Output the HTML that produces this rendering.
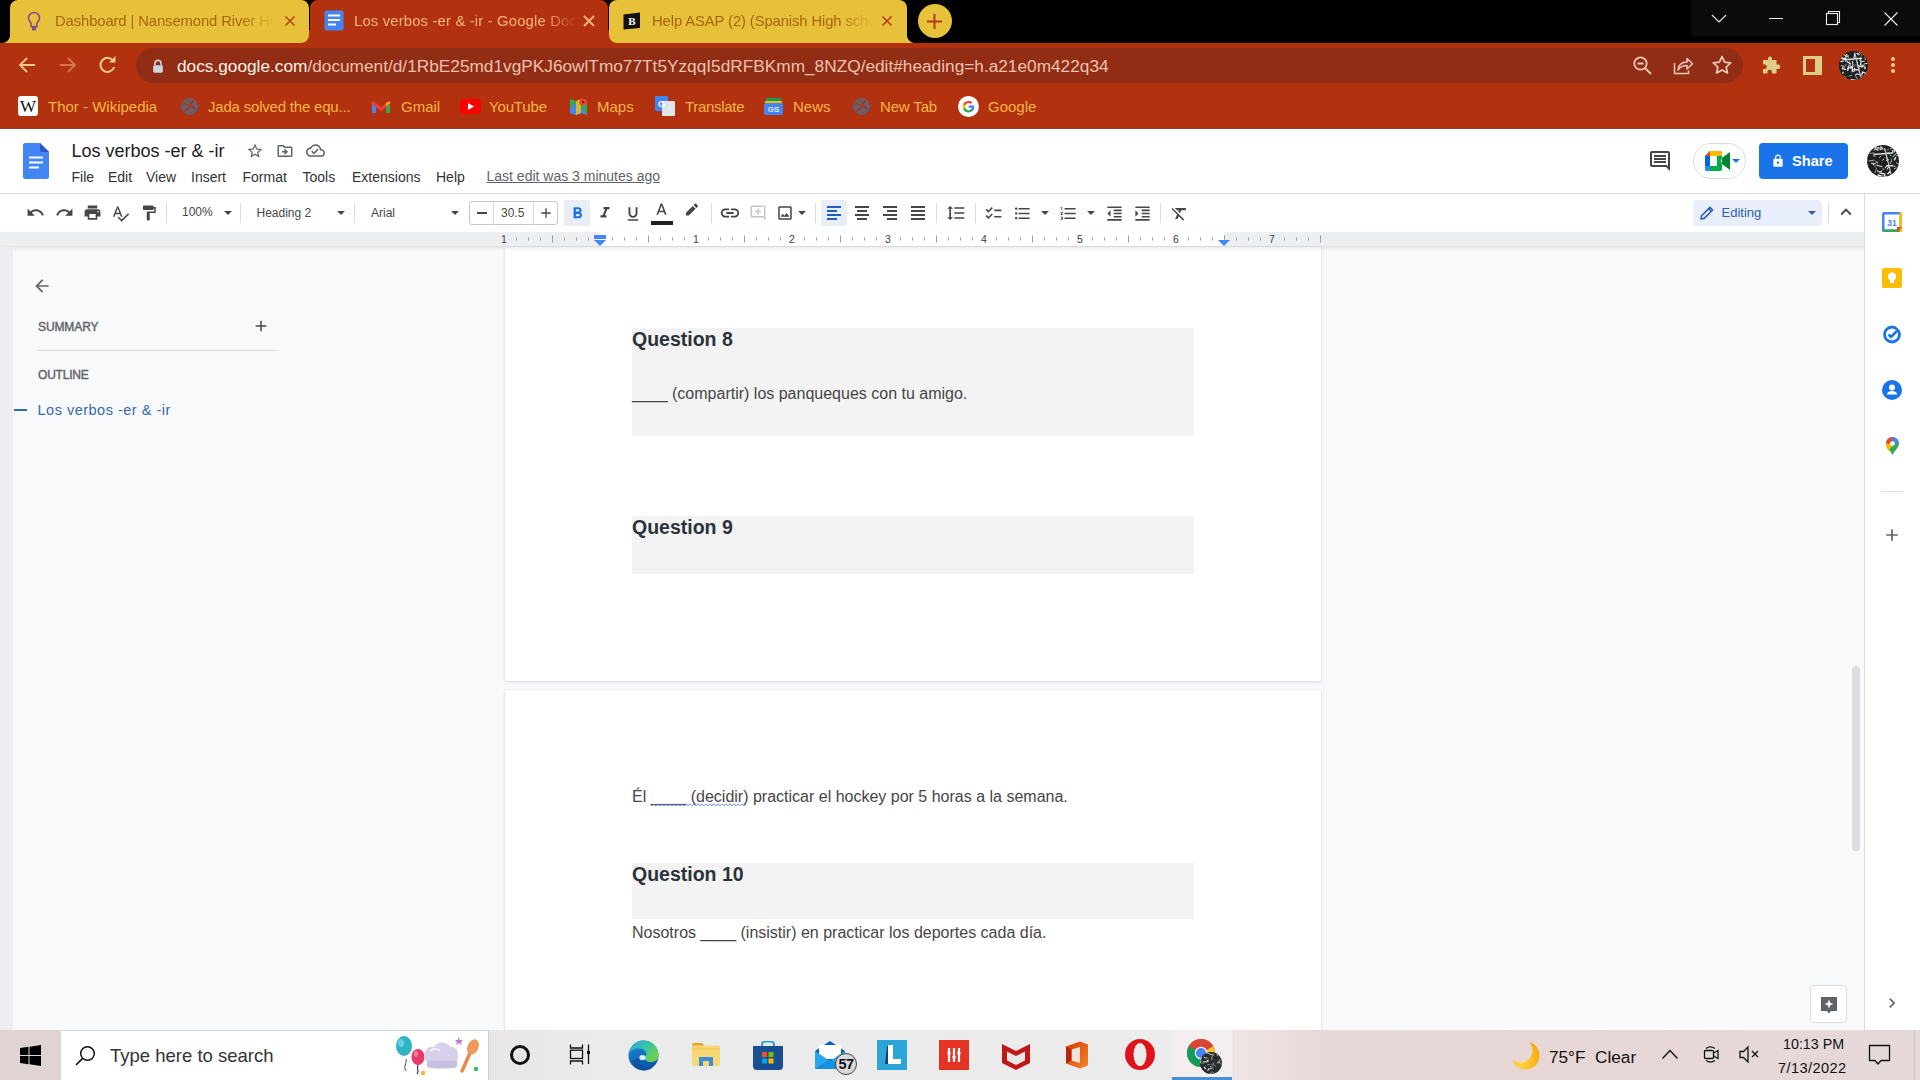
<!DOCTYPE html>
<html><head><meta charset="utf-8">
<style>
*{margin:0;padding:0;box-sizing:border-box}
html,body{width:1920px;height:1080px;overflow:hidden;background:#f8f9fa;font-family:"Liberation Sans",sans-serif}
.a{position:absolute}
svg{display:block}
/* chrome */
#tabstrip{left:0;top:0;width:1920px;height:43px;background:#000}
.tab{top:0;height:43px;border-radius:8px 8px 0 0}
.tabY{background:#e8c13a;border-radius:8px}
.tabtxt{font-size:14.8px;top:12.6px;white-space:nowrap;overflow:hidden;letter-spacing:-0.1px}
#toolbar{left:0;top:43px;width:1920px;height:86px;background:#b2310f;border-bottom:1px solid #904029}
#omni{left:136px;top:48px;width:1607px;height:35px;border-radius:18px;background:#922d15}
.bm{top:97.8px;font-size:15px;color:#f2b545;white-space:nowrap}
/* docs */
#docshead{left:0;top:129px;width:1920px;height:65px;background:#fff}
#docsbar{left:0;top:194px;width:1864px;height:38px;background:#fff}
#ruler{left:0;top:232px;width:1864px;height:15px;background:#edeef0;border-bottom:1px solid #e3e5e8;box-shadow:0 1px 3px rgba(60,64,67,.10)}
#content{left:0;top:247px;width:1864px;height:783px;background:#f8f9fa}
.page{background:#fff;box-shadow:0 1px 3px rgba(60,64,67,.15),0 0 1px rgba(60,64,67,.2)}
.qbox{background:#f3f3f3}
.qh{font-weight:bold;font-size:19.5px;letter-spacing:0px;color:#2a323a;white-space:nowrap}
.qt{font-size:16px;color:#464646;white-space:nowrap}
#side{left:1864px;top:194px;width:56px;height:836px;background:#fff;border-left:1px solid #dadce0}
/* taskbar */
#taskbar{left:0;top:1030px;width:1920px;height:50px;background:linear-gradient(90deg,#e0d4d5 0px,#e0d4d5 61px,#e8e6e6 489px,#ebebeb 600px,#ebebeb 1170px,#efe5e5 1236px,#e7d8d8 1320px,#e7d6d6 1600px,#e6d9da 1914px)}
</style></head><body>

<!-- TAB STRIP -->
<div id="tabstrip" class="a"></div>
<div class="a" style="left:300px;top:30px;width:320px;height:13px;background:#b2310f"></div>
<div class="a tab tabY" style="left:10px;width:299px;border-radius:8px 8px 8px 0"></div>
<div class="a" style="left:2px;top:35px;width:8px;height:8px;background:radial-gradient(circle at 0 0,#000 7.5px,#e8c13a 8.5px)"></div>
<div class="a tab" style="left:310px;width:298px;background:#b2310f"></div>
<div class="a tab tabY" style="left:609px;width:298px;border-radius:8px 8px 0 8px"></div>
<div class="a" style="left:907px;top:35px;width:8px;height:8px;background:radial-gradient(circle at 100% 0,#000 7.5px,#e8c13a 8.5px)"></div>
<div class="a" style="left:918px;top:4px;width:34px;height:34px;border-radius:50%;background:#e8c13a"></div>

<!-- tab contents -->
<svg class="a" style="left:27px;top:11px" width="14" height="22" viewBox="0 0 14 22"><path d="M7 1.5a5.5 5.5 0 0 0-5.5 5.5c0 2.2 1.6 3.6 2.6 5.3v3.2h5.8v-3.2c1-1.7 2.6-3.1 2.6-5.3A5.5 5.5 0 0 0 7 1.5z" fill="none" stroke="#8a4a8e" stroke-width="1.6"/><path d="M4.5 16.5h5M5 18.5h4" stroke="#8a4a8e" stroke-width="1.8"/></svg>
<div class="a tabtxt" style="left:55px;width:218px;color:#a9640f;-webkit-mask-image:linear-gradient(90deg,#000 85%,transparent 100%)">Dashboard | Nansemond River High School</div>
<svg class="a" style="left:284px;top:15px" width="12" height="12" viewBox="0 0 12 12"><path d="M1.5 1.5L10.5 10.5M10.5 1.5L1.5 10.5" stroke="#b54a17" stroke-width="1.7"/></svg>

<svg class="a" style="left:324px;top:10px" width="20" height="21" viewBox="0 0 20 21"><rect x="0.5" y="0.5" width="19" height="20" rx="2" fill="#4285f4"/><path d="M4 5.5h12M4 10h12M4 14.5h8" stroke="#fff" stroke-width="2"/></svg>
<div class="a tabtxt" style="left:354px;width:224px;color:#f7b77a;letter-spacing:0.18px;-webkit-mask-image:linear-gradient(90deg,#000 84%,transparent 100%)">Los verbos -er &amp; -ir - Google Docs</div>
<svg class="a" style="left:582px;top:14px" width="14" height="14" viewBox="0 0 14 14"><path d="M2 2L12 12M12 2L2 12" stroke="#f5b47a" stroke-width="1.8"/></svg>

<svg class="a" style="left:623px;top:12px" width="18" height="18" viewBox="0 0 18 18"><path d="M0.5 2.5L17 0.5V16L0.5 17.5z" fill="#111"/><text x="9" y="13" text-anchor="middle" font-family="Liberation Serif" font-weight="bold" font-size="11" fill="#fff">B</text></svg>
<div class="a tabtxt" style="left:652px;width:220px;color:#a9640f;-webkit-mask-image:linear-gradient(90deg,#000 85%,transparent 100%)">Help ASAP (2) (Spanish High school)</div>
<svg class="a" style="left:880px;top:14px" width="14" height="14" viewBox="0 0 14 14"><path d="M2.5 2.5L11.5 11.5M11.5 2.5L2.5 11.5" stroke="#b83c15" stroke-width="1.7"/></svg>
<svg class="a" style="left:925px;top:12px" width="19" height="19" viewBox="0 0 19 19"><path d="M9.5 2v15M2 9.5h15" stroke="#b0361a" stroke-width="1.9"/></svg>

<!-- window controls -->
<div class="a" style="left:1691px;top:0;width:229px;height:36px;background:#0b0b0b"></div>
<svg class="a" style="left:1710px;top:12px" width="18" height="12" viewBox="0 0 18 12"><path d="M2 3l7 7 7-7" fill="none" stroke="#ddd" stroke-width="1.2"/></svg>
<div class="a" style="left:1769px;top:18px;width:14px;height:1px;background:#eee"></div>
<svg class="a" style="left:1825px;top:10px" width="16" height="16" viewBox="0 0 16 16"><path d="M3.5 3.5V1.5h11v11h-2" fill="none" stroke="#eee" stroke-width="1.1"/><rect x="1.5" y="3.5" width="11" height="11" fill="none" stroke="#eee" stroke-width="1.1"/></svg>
<svg class="a" style="left:1883px;top:11px" width="16" height="16" viewBox="0 0 16 16"><path d="M1.5 1.5l13 13M14.5 1.5l-13 13" stroke="#eee" stroke-width="1.1"/></svg>


<div id="toolbar" class="a"></div>
<div id="omni" class="a"></div>

<!-- nav -->
<svg class="a" style="left:17px;top:55px" width="20" height="20" viewBox="0 0 20 20"><path d="M18 10H4M10 3l-7 7 7 7" fill="none" stroke="#f0c98e" stroke-width="1.8"/></svg>
<svg class="a" style="left:58px;top:55px" width="20" height="20" viewBox="0 0 20 20"><path d="M2 10h14M10 3l7 7-7 7" fill="none" stroke="#d8774a" stroke-width="1.8"/></svg>
<svg class="a" style="left:97px;top:55px" width="22" height="20" viewBox="0 0 22 20"><path d="M16.5 6.2A7 7 0 1 0 17.2 12" fill="none" stroke="#f0c98e" stroke-width="2"/><path d="M12 7.5h6.5V1z" fill="#f0c98e"/></svg>
<svg class="a" style="left:151px;top:58.5px" width="14" height="15" viewBox="0 0 16 17"><path d="M4.5 7V5a3.5 3.5 0 0 1 7 0v2" fill="none" stroke="#c9d6de" stroke-width="1.8"/><rect x="2.5" y="7" width="11" height="8.5" rx="1.5" fill="#c9d6de"/></svg>
<div class="a" id="url" style="left:177px;top:55.7px;font-size:17.25px;color:#ecc2ae;white-space:nowrap"><span style="color:#fbf3ea">docs.google.com</span>/document/d/1RbE25md1vgPKJ6owlTmo77Tt5YzqqI5dRFBKmm_8NZQ/edit#heading=h.a21e0m422q34</div>
<svg class="a" style="left:1632px;top:55px" width="21" height="21" viewBox="0 0 21 21"><circle cx="8.5" cy="8.5" r="6.2" fill="none" stroke="#f0c9b6" stroke-width="1.8"/><path d="M5.5 8.5h6M13 13l6 6" stroke="#f0c9b6" stroke-width="1.8"/></svg>
<svg class="a" style="left:1673px;top:55px" width="21" height="20" viewBox="0 0 21 20"><path d="M1.5 8v10.5h14v-3" fill="none" stroke="#f0c9b6" stroke-width="1.5"/><path d="M5 15c0-5 4-8 9-8V3.5l5.5 5.3L14 14v-3.5c-4 0-7 1.5-9 4.5z" fill="none" stroke="#f0c9b6" stroke-width="1.5" stroke-linejoin="round"/></svg>
<svg class="a" style="left:1711px;top:54px" width="22" height="22" viewBox="0 0 22 22"><path d="M11 2.5l2.6 5.6 6.1.7-4.5 4.2 1.2 6-5.4-3.1-5.4 3.1 1.2-6-4.5-4.2 6.1-.7z" fill="none" stroke="#f0c9b6" stroke-width="1.7" stroke-linejoin="round"/></svg>
<svg class="a" style="left:1762px;top:55px" width="20" height="20" viewBox="0 0 20 20"><path d="M8 1.5a2 2 0 0 1 2 2V5h4.5v4.5H16a2.3 2.3 0 0 1 0 4.6h-1.5v4.4H10V17a2.3 2.3 0 0 0-4.6 0v1.5H1v-4.4h1.5a2.3 2.3 0 0 0 0-4.6H1V5h5V3.5a2 2 0 0 1 2-2z" fill="#dccd8a"/></svg>
<svg class="a" style="left:1803px;top:56px" width="19" height="19" viewBox="0 0 19 19"><rect x="0" y="0" width="19" height="19" fill="#dccd8a"/><rect x="3" y="3" width="9" height="13" fill="#b2310f"/></svg>
<svg class="a" style="left:1839px;top:51px" width="29" height="29" viewBox="0 0 29 29"><defs><clipPath id="av1"><circle cx="14.5" cy="14.5" r="14.5"/></clipPath></defs><g clip-path="url(#av1)"><rect width="29" height="29" fill="#1e2122"/><path d="M9.4 4.4L8.6 6.0" stroke="#e8e8e8" stroke-width="0.9"/><path d="M1.7 14.7L5.1 15.1" stroke="#e8e8e8" stroke-width="0.8"/><path d="M16.0 1.7L14.8 7.4" stroke="#e8e8e8" stroke-width="1.1"/><path d="M11.5 28.3L16.8 29.1" stroke="#ffffff" stroke-width="0.9"/><path d="M15.7 16.6L14.8 21.0" stroke="#e8e8e8" stroke-width="1.1"/><path d="M18.5 10.8L18.3 12.6" stroke="#e8e8e8" stroke-width="1.1"/><path d="M14.4 15.4L11.6 17.7" stroke="#a0a0a0" stroke-width="0.9"/><path d="M7.2 5.2L5.8 6.4" stroke="#ffffff" stroke-width="1.0"/><path d="M25.4 21.2L29.0 25.8" stroke="#e8e8e8" stroke-width="1.0"/><path d="M4.8 9.9L1.5 10.6" stroke="#e8e8e8" stroke-width="1.2"/><path d="M16.6 25.4L19.2 29.2" stroke="#a0a0a0" stroke-width="1.1"/><path d="M13.2 24.4L9.7 25.0" stroke="#e8e8e8" stroke-width="0.6"/><path d="M20.3 18.8L15.1 18.9" stroke="#ffffff" stroke-width="1.2"/><path d="M25.7 10.1L22.7 10.6" stroke="#e8e8e8" stroke-width="1.0"/><path d="M6.3 8.3L4.1 10.7" stroke="#a0a0a0" stroke-width="0.7"/><path d="M13.0 15.9L8.2 17.8" stroke="#ffffff" stroke-width="1.2"/><path d="M28.6 19.8L29.5 22.2" stroke="#e8e8e8" stroke-width="0.7"/><path d="M6.7 6.8L6.9 10.9" stroke="#ffffff" stroke-width="0.8"/><path d="M4.2 15.5L3.2 18.3" stroke="#cfcfcf" stroke-width="1.2"/><path d="M14.9 17.9L14.0 19.4" stroke="#a0a0a0" stroke-width="0.9"/><path d="M11.4 14.0L12.2 16.2" stroke="#cfcfcf" stroke-width="1.0"/><path d="M3.2 17.4L7.0 18.7" stroke="#e8e8e8" stroke-width="1.4"/><path d="M17.8 2.0L20.3 4.0" stroke="#ffffff" stroke-width="1.4"/><path d="M17.5 13.8L20.9 15.1" stroke="#a0a0a0" stroke-width="1.0"/><path d="M9.0 4.2L5.6 7.6" stroke="#a0a0a0" stroke-width="1.3"/><path d="M4.7 0.7L0.9 1.3" stroke="#cfcfcf" stroke-width="1.2"/><path d="M26.5 22.0L29.1 25.5" stroke="#e8e8e8" stroke-width="1.2"/><path d="M7.6 10.6L11.9 13.1" stroke="#ffffff" stroke-width="1.1"/><path d="M17.8 22.9L16.1 24.5" stroke="#cfcfcf" stroke-width="1.3"/><path d="M21.5 6.6L21.3 9.7" stroke="#e8e8e8" stroke-width="1.4"/><path d="M22.9 13.7L26.4 16.1" stroke="#ffffff" stroke-width="1.0"/><path d="M27.2 28.7L24.1 29.1" stroke="#cfcfcf" stroke-width="0.7"/><path d="M13.6 9.8L14.0 15.7" stroke="#e8e8e8" stroke-width="1.0"/><path d="M18.9 23.2L23.3 24.4" stroke="#a0a0a0" stroke-width="1.2"/><path d="M21.8 13.9L26.0 16.5" stroke="#ffffff" stroke-width="0.7"/><path d="M27.4 20.9L28.0 25.7" stroke="#e8e8e8" stroke-width="1.2"/><path d="M4.9 3.7L9.9 6.2" stroke="#cfcfcf" stroke-width="1.1"/><path d="M17.3 13.8L15.1 14.2" stroke="#cfcfcf" stroke-width="0.6"/><path d="M23.2 21.1L27.8 22.6" stroke="#cfcfcf" stroke-width="0.9"/><path d="M25.3 24.0L27.4 25.6" stroke="#ffffff" stroke-width="1.0"/><path d="M22.1 9.5L21.4 14.7" stroke="#e8e8e8" stroke-width="1.3"/><path d="M10.3 13.3L8.8 18.7" stroke="#a0a0a0" stroke-width="1.3"/><path d="M25.5 3.8L28.8 5.5" stroke="#a0a0a0" stroke-width="1.2"/><path d="M17.6 22.5L19.6 23.5" stroke="#e8e8e8" stroke-width="1.0"/><path d="M9.5 15.0L8.6 20.0" stroke="#e8e8e8" stroke-width="1.3"/><path d="M1.6 5.5L3.6 5.8" stroke="#a0a0a0" stroke-width="1.0"/><path d="M22.0 26.5L22.8 30.7" stroke="#cfcfcf" stroke-width="1.2"/><path d="M13.1 15.5L13.5 21.2" stroke="#ffffff" stroke-width="1.3"/><path d="M25.9 5.9L26.4 9.2" stroke="#a0a0a0" stroke-width="1.0"/><path d="M2.1 7.0L6.5 8.0" stroke="#e8e8e8" stroke-width="1.3"/><path d="M4.5 20.8L3.4 22.6" stroke="#cfcfcf" stroke-width="1.4"/><path d="M6.4 27.6L7.5 31.1" stroke="#cfcfcf" stroke-width="0.7"/><path d="M12.5 15.0L13.7 17.0" stroke="#ffffff" stroke-width="0.7"/><path d="M10.6 9.8L11.2 14.4" stroke="#a0a0a0" stroke-width="0.9"/><path d="M18.1 14.9L23.9 16.0" stroke="#cfcfcf" stroke-width="1.4"/><path d="M3.0 7.7L8.0 8.3" stroke="#ffffff" stroke-width="1.2"/><path d="M23.8 24.6L20.8 29.5" stroke="#a0a0a0" stroke-width="0.7"/><path d="M26.7 16.5L25.5 18.1" stroke="#e8e8e8" stroke-width="1.2"/><path d="M5.3 26.0L6.4 27.1" stroke="#e8e8e8" stroke-width="1.2"/><path d="M2.4 24.8L7.7 25.9" stroke="#a0a0a0" stroke-width="0.6"/><path d="M28.8 12.1L24.7 13.2" stroke="#e8e8e8" stroke-width="1.0"/><path d="M6.9 3.2L8.4 4.0" stroke="#cfcfcf" stroke-width="1.3"/><path d="M18.2 15.4L21.0 17.5" stroke="#cfcfcf" stroke-width="0.8"/><path d="M23.3 28.8L24.9 29.0" stroke="#cfcfcf" stroke-width="1.0"/><path d="M7.1 13.0L5.0 16.9" stroke="#a0a0a0" stroke-width="1.0"/><path d="M25.8 28.1L27.2 30.2" stroke="#cfcfcf" stroke-width="0.9"/><path d="M24.1 20.5L22.8 23.5" stroke="#ffffff" stroke-width="1.4"/><path d="M24.3 0.4L22.2 5.5" stroke="#a0a0a0" stroke-width="0.7"/><path d="M2.5 24.4L-1.7 26.2" stroke="#ffffff" stroke-width="1.1"/><path d="M20.1 1.3L22.4 2.8" stroke="#e8e8e8" stroke-width="0.8"/><path d="M5.8 8.7L23.2 7.2" stroke="#ddd" stroke-width="1.5"/><path d="M16.0 2.9L21.8 26.1" stroke="#ccc" stroke-width="1.2"/></g></svg>
<div class="a" style="left:1890.5px;top:57px;width:4px;height:4px;border-radius:50%;background:#f7c490"></div>
<div class="a" style="left:1890.5px;top:63px;width:4px;height:4px;border-radius:50%;background:#f7c490"></div>
<div class="a" style="left:1890.5px;top:69px;width:4px;height:4px;border-radius:50%;background:#f7c490"></div>



<!-- bookmarks -->
<div class="a" style="left:18px;top:96px;width:20px;height:20px;background:#fff;border-radius:3px;font-family:'Liberation Serif';font-size:17px;color:#111;text-align:center;line-height:22px">W</div>
<div class="a bm" style="left:48px">Thor - Wikipedia</div>
<svg class="a" style="left:180px;top:97px" width="19" height="19" viewBox="0 0 19 19"><circle cx="9.5" cy="9.5" r="8.5" fill="#6b5d6e"/><path d="M3 6c3 0 4 2 6 2s2-3 5-4M5 15c1-3 4-3 5-5s3 0 5 2" stroke="#b2310f" stroke-width="1.6" fill="none"/></svg>
<div class="a bm" style="left:208px;letter-spacing:-0.2px">Jada solved the equ...</div>
<svg class="a" style="left:371px;top:99px" width="20" height="15" viewBox="0 0 20 15"><path d="M1 3v11h4V6z" fill="#4285f4"/><path d="M15 6v8h4V3z" fill="#34a853"/><path d="M1 3l9 7 9-7" fill="none" stroke="#ea4335" stroke-width="3"/><path d="M15 4v3l4-3V2.5z" fill="#fbbc04"/></svg>
<div class="a bm" style="left:401px">Gmail</div>
<svg class="a" style="left:460px;top:99px" width="21" height="15" viewBox="0 0 21 15"><rect x="0" y="0" width="21" height="15" rx="4" fill="#ff0000"/><path d="M8 4l6 3.5L8 11z" fill="#fff"/></svg>
<div class="a bm" style="left:489px;letter-spacing:-0.15px">YouTube</div>
<svg class="a" style="left:569px;top:97px" width="19" height="19" viewBox="0 0 19 19"><path d="M1 2l6 2 5-2 6 2v14l-6-2-5 2-6-2z" fill="#34a853"/><path d="M1 12l6-6 11 11v1l-6-2-5 2-6-2z" fill="#4285f4"/><path d="M7 4l5-2v14l-5 2z" fill="#fbbc04" opacity=".8"/><circle cx="14" cy="5" r="3.6" fill="#ea4335"/><circle cx="14" cy="5" r="1.3" fill="#a50e0e"/></svg>
<div class="a bm" style="left:597px">Maps</div>
<svg class="a" style="left:655px;top:96px" width="20" height="21" viewBox="0 0 20 21"><rect x="0" y="0" width="13" height="15" rx="1" fill="#4285f4"/><rect x="7" y="5" width="13" height="15" rx="1" fill="#dfe3ea"/><text x="6.5" y="11" font-size="9" text-anchor="middle" fill="#fff" font-family="Liberation Sans" font-weight="bold">G</text></svg>
<div class="a bm" style="left:685px;letter-spacing:-0.3px">Translate</div>
<svg class="a" style="left:764px;top:97px" width="19" height="19" viewBox="0 0 19 19"><rect x="2" y="1" width="15" height="6" rx="1" fill="#0f9d58"/><rect x="1" y="4" width="17" height="4" fill="#fbbc04"/><rect x="0" y="6" width="19" height="12" rx="2" fill="#4285f4"/><text x="9.5" y="15" font-size="8" text-anchor="middle" fill="#dfe8ff" font-family="Liberation Sans" font-weight="bold">GS</text></svg>
<div class="a bm" style="left:793px">News</div>
<svg class="a" style="left:852px;top:97px" width="19" height="19" viewBox="0 0 19 19"><circle cx="9.5" cy="9.5" r="8.5" fill="#6b5d6e"/><path d="M3 6c3 0 4 2 6 2s2-3 5-4M5 15c1-3 4-3 5-5s3 0 5 2" stroke="#b2310f" stroke-width="1.6" fill="none"/></svg>
<div class="a bm" style="left:880px;letter-spacing:-0.15px">New Tab</div>
<svg class="a" style="left:958px;top:96px" width="21" height="21" viewBox="0 0 21 21"><circle cx="10.5" cy="10.5" r="10.5" fill="#fff"/><path d="M16.3 10.7c0-.4 0-.8-.1-1.2H10.6v2.3h3.2a2.8 2.8 0 0 1-1.2 1.8v1.5h1.9c1.1-1 1.8-2.6 1.8-4.4z" fill="#4285f4"/><path d="M10.6 16.5c1.6 0 3-.5 3.9-1.4l-1.9-1.5c-.5.4-1.2.6-2 .6-1.5 0-2.8-1-3.3-2.4h-2v1.5a5.9 5.9 0 0 0 5.3 3.2z" fill="#34a853"/><path d="M7.3 11.8a3.6 3.6 0 0 1 0-2.3V8h-2a5.9 5.9 0 0 0 0 5.3z" fill="#fbbc04"/><path d="M10.6 7.1c.9 0 1.6.3 2.2.9l1.7-1.7a5.9 5.9 0 0 0-9.2 1.7l2 1.5c.5-1.4 1.8-2.4 3.3-2.4z" fill="#ea4335"/></svg>
<div class="a bm" style="left:988px">Google</div>

<!-- DOCS -->
<div id="docshead" class="a"></div>
<div id="docsbar" class="a"></div>
<div id="ruler" class="a"></div>
<div id="content" class="a"></div>
<div id="side" class="a"></div>
<!-- docs header -->
<svg class="a" style="left:23px;top:143px" width="26" height="36" viewBox="0 0 26 36"><path d="M2.5 0H17l9 9v24.5a2.5 2.5 0 0 1-2.5 2.5h-21A2.5 2.5 0 0 1 0 33.5v-31A2.5 2.5 0 0 1 2.5 0z" fill="#4285f4"/><path d="M17 0l9 9h-6.5A2.5 2.5 0 0 1 17 6.5z" fill="#2a56c6"/><path d="M17 9l9 9V9z" fill="#3367d6" opacity=".0"/><path d="M6 14.5h14M6 19.5h14M6 24.5h10" stroke="#fff" stroke-width="2"/></svg>
<div class="a" style="left:71.5px;top:141px;font-size:18px;color:#202124;white-space:nowrap">Los verbos -er &amp; -ir</div>
<svg class="a" style="left:246.0px;top:141.5px" width="18" height="18" viewBox="0 0 24 24"><path d="M22 9.24l-7.19-.62L12 2 9.19 8.63 2 9.24l5.46 4.73L5.82 21 12 17.27 18.18 21l-1.63-7.03L22 9.24zM12 15.4l-3.76 2.27 1-4.28-3.32-2.88 4.38-.38L12 6.1l1.71 4.04 4.38.38-3.32 2.88 1 4.28L12 15.4z" fill="#5f6368"/></svg>
<svg class="a" style="left:276.0px;top:141.5px" width="18" height="18" viewBox="0 0 24 24"><path d="M20 6h-8l-2-2H4c-1.1 0-1.99.9-1.99 2L2 18c0 1.1.9 2 2 2h16c1.1 0 2-.9 2-2V8c0-1.1-.9-2-2-2zm0 12H4V6h5.17l2 2H20v10zm-7.84-6H8v2h4.160l-1.59 1.59L11.99 17 16 13.01 11.99 9l-1.41 1.41L12.16 12z" fill="#5f6368"/></svg>
<svg class="a" style="left:305.5px;top:141.0px" width="19" height="19" viewBox="0 0 24 24"><path d="M19.35 10.04C18.67 6.59 15.64 4 12 4 9.11 4 6.6 5.64 5.35 8.04 2.34 8.36 0 10.91 0 14c0 3.31 2.69 6 6 6h13c2.76 0 5-2.24 5-5 0-2.64-2.05-4.78-4.65-4.96zM19 18H6c-2.21 0-4-1.79-4-4 0-2.05 1.53-3.76 3.56-3.97l1.07-.11.5-.95C8.08 7.14 9.94 6 12 6c2.62 0 4.88 1.86 5.39 4.43l.3 1.5 1.53.11c1.56.1 2.78 1.41 2.78 2.96 0 1.65-1.35 3-3 3zm-9-3.82l-2.09-2.09L6.5 13.5 10 17l6.01-6.01-1.41-1.41z" fill="#5f6368"/></svg>
<div class="a" style="left:71.5px;top:168.7px;font-size:14px;color:#303336;white-space:nowrap">File</div>
<div class="a" style="left:108px;top:168.7px;font-size:14px;color:#303336;white-space:nowrap">Edit</div>
<div class="a" style="left:146px;top:168.7px;font-size:14px;color:#303336;white-space:nowrap">View</div>
<div class="a" style="left:191px;top:168.7px;font-size:14px;color:#303336;white-space:nowrap">Insert</div>
<div class="a" style="left:242.5px;top:168.7px;font-size:14px;color:#303336;white-space:nowrap">Format</div>
<div class="a" style="left:302.5px;top:168.7px;font-size:14px;color:#303336;white-space:nowrap">Tools</div>
<div class="a" style="left:352px;top:168.7px;font-size:14px;color:#303336;white-space:nowrap">Extensions</div>
<div class="a" style="left:436px;top:168.7px;font-size:14px;color:#303336;white-space:nowrap">Help</div>
<div class="a" style="left:486.5px;top:167.7px;font-size:14px;color:#5f6368;white-space:nowrap;text-decoration:underline;text-underline-offset:1px">Last edit was 3 minutes ago</div>
<svg class="a" style="left:1648.0px;top:149.0px" width="24" height="24" viewBox="0 0 24 24"><path d="M21.99 4c0-1.1-.89-2-1.99-2H4c-1.1 0-2 .9-2 2v12c0 1.1.9 2 2 2h14l4 4-.01-18zM20 4v13.17L18.83 16H4V4h16zM6 12h12v2H6zm0-3h12v2H6zm0-3h12v2H6z" fill="#444746"/></svg>
<div class="a" style="left:1693px;top:143px;width:53px;height:36px;border:1px solid #dadce0;border-radius:18px;background:#fff"></div>
<svg class="a" style="left:1705px;top:151px" width="25" height="20" viewBox="0 0 25 20"><path d="M0 5L5 0h10a2 2 0 0 1 2 2v5l-1 3 1 3v5a2 2 0 0 1-2 2H2a2 2 0 0 1-2-2z" fill="#00ac47"/><path d="M0 5L5 0h10a2 2 0 0 1 2 2v3H0z" fill="#ffba00"/><path d="M0 5h5v10H0z" fill="#0066da"/><path d="M0 15h5v5H2a2 2 0 0 1-2-2z" fill="#2684fc"/><path d="M5 0v5H0z" fill="#e94235"/><path d="M17 7l8-6v18l-8-6z" fill="#00832d"/><rect x="5" y="5" width="7" height="10" fill="#fff"/></svg>
<div class="a" style="left:1732px;top:159px;width:0;height:0;border-left:4px solid transparent;border-right:4px solid transparent;border-top:4px solid #1a73e8"></div>
<div class="a" style="left:1759px;top:143px;width:89px;height:36px;border-radius:4px;background:#1a73e8"></div>
<svg class="a" style="left:1771.0px;top:154.0px" width="14" height="14" viewBox="0 0 24 24"><path d="M18 8h-1V6c0-2.76-2.24-5-5-5S7 3.240 7 6v2H6c-1.1 0-2 .9-2 2v10c0 1.1.9 2 2 2h12c1.1 0 2-.9 2-2V10c0-1.1-.9-2-2-2zm-6 9c-1.1 0-2-.9-2-2s.9-2 2-2 2 .9 2 2-.9 2-2 2zm3.1-9H8.9V6c0-1.71 1.39-3.1 3.1-3.1 1.71 0 3.1 1.39 3.1 3.1v2z" fill="#fff"/></svg>
<div class="a" style="left:1792px;top:152.5px;font-size:14.6px;font-weight:bold;color:#fff;white-space:nowrap">Share</div>
<svg class="a" style="left:1867px;top:145px" width="32" height="32" viewBox="0 0 32 32"><defs><clipPath id="av2"><circle cx="16.0" cy="16.0" r="16.0"/></clipPath></defs><g clip-path="url(#av2)"><rect width="32" height="32" fill="#1e2122"/><path d="M30.8 31.1L30.4 33.7" stroke="#ffffff" stroke-width="0.8"/><path d="M5.9 10.7L8.5 11.4" stroke="#cfcfcf" stroke-width="0.8"/><path d="M24.8 2.9L23.0 4.1" stroke="#e8e8e8" stroke-width="0.9"/><path d="M9.6 20.1L15.2 21.7" stroke="#cfcfcf" stroke-width="1.1"/><path d="M22.9 28.1L23.9 30.9" stroke="#a0a0a0" stroke-width="0.7"/><path d="M23.2 20.6L28.4 21.3" stroke="#a0a0a0" stroke-width="1.2"/><path d="M26.0 4.5L25.7 8.2" stroke="#e8e8e8" stroke-width="1.3"/><path d="M18.7 28.6L16.2 32.4" stroke="#cfcfcf" stroke-width="0.7"/><path d="M1.3 20.4L-1.8 20.8" stroke="#a0a0a0" stroke-width="1.0"/><path d="M20.1 20.0L18.1 23.2" stroke="#e8e8e8" stroke-width="1.0"/><path d="M2.2 29.8L0.4 30.4" stroke="#e8e8e8" stroke-width="1.2"/><path d="M15.2 25.9L12.9 27.1" stroke="#cfcfcf" stroke-width="0.8"/><path d="M20.8 14.7L19.2 15.6" stroke="#ffffff" stroke-width="1.2"/><path d="M19.7 20.6L21.8 21.1" stroke="#ffffff" stroke-width="1.1"/><path d="M22.2 19.9L25.5 21.4" stroke="#a0a0a0" stroke-width="0.8"/><path d="M21.5 22.1L20.0 24.5" stroke="#ffffff" stroke-width="1.0"/><path d="M14.9 3.8L12.7 4.6" stroke="#e8e8e8" stroke-width="1.3"/><path d="M0.6 14.7L-4.4 17.8" stroke="#a0a0a0" stroke-width="1.4"/><path d="M12.4 29.3L10.6 29.7" stroke="#e8e8e8" stroke-width="0.7"/><path d="M16.8 30.5L21.5 32.6" stroke="#ffffff" stroke-width="1.3"/><path d="M22.5 7.4L19.0 8.6" stroke="#e8e8e8" stroke-width="0.7"/><path d="M30.4 21.8L31.8 26.4" stroke="#a0a0a0" stroke-width="0.9"/><path d="M10.1 26.9L15.0 26.9" stroke="#a0a0a0" stroke-width="0.7"/><path d="M29.6 22.8L27.0 23.7" stroke="#ffffff" stroke-width="0.7"/><path d="M12.5 27.8L18.0 29.2" stroke="#ffffff" stroke-width="1.3"/><path d="M9.0 1.7L6.9 5.5" stroke="#cfcfcf" stroke-width="0.8"/><path d="M8.5 16.4L11.1 18.1" stroke="#a0a0a0" stroke-width="1.3"/><path d="M26.0 20.2L20.5 21.7" stroke="#cfcfcf" stroke-width="1.2"/><path d="M1.6 23.4L2.3 28.3" stroke="#ffffff" stroke-width="1.0"/><path d="M29.2 17.6L32.1 19.3" stroke="#ffffff" stroke-width="0.8"/><path d="M23.6 31.2L26.7 34.5" stroke="#ffffff" stroke-width="1.0"/><path d="M21.4 3.8L20.6 5.5" stroke="#a0a0a0" stroke-width="1.0"/><path d="M14.5 10.7L12.0 13.0" stroke="#cfcfcf" stroke-width="0.8"/><path d="M5.6 17.8L7.3 20.5" stroke="#cfcfcf" stroke-width="1.3"/><path d="M24.0 13.2L25.0 16.9" stroke="#a0a0a0" stroke-width="0.8"/><path d="M24.1 15.9L23.3 19.0" stroke="#cfcfcf" stroke-width="0.7"/><path d="M28.7 12.3L27.2 15.4" stroke="#ffffff" stroke-width="1.3"/><path d="M27.9 0.7L32.6 1.2" stroke="#a0a0a0" stroke-width="1.4"/><path d="M15.7 2.3L10.1 3.6" stroke="#a0a0a0" stroke-width="1.4"/><path d="M8.0 3.5L11.4 5.3" stroke="#e8e8e8" stroke-width="1.4"/><path d="M23.1 20.7L20.5 23.1" stroke="#e8e8e8" stroke-width="0.6"/><path d="M4.0 18.2L8.7 18.8" stroke="#cfcfcf" stroke-width="1.1"/><path d="M16.9 14.0L15.5 15.3" stroke="#ffffff" stroke-width="1.0"/><path d="M18.7 12.4L21.9 15.1" stroke="#e8e8e8" stroke-width="1.0"/><path d="M31.9 8.9L34.8 13.3" stroke="#cfcfcf" stroke-width="1.0"/><path d="M7.5 7.9L2.9 8.5" stroke="#ffffff" stroke-width="0.6"/><path d="M6.2 28.3L5.4 30.0" stroke="#cfcfcf" stroke-width="1.1"/><path d="M29.6 7.3L32.6 7.6" stroke="#a0a0a0" stroke-width="0.9"/><path d="M12.7 0.2L15.9 4.4" stroke="#e8e8e8" stroke-width="0.8"/><path d="M31.0 10.0L28.9 11.3" stroke="#cfcfcf" stroke-width="0.8"/><path d="M28.5 3.5L26.9 7.4" stroke="#cfcfcf" stroke-width="1.0"/><path d="M29.1 1.8L27.5 7.2" stroke="#e8e8e8" stroke-width="0.8"/><path d="M31.2 4.5L32.9 4.8" stroke="#a0a0a0" stroke-width="1.0"/><path d="M22.8 10.1L24.5 10.7" stroke="#cfcfcf" stroke-width="0.9"/><path d="M5.9 29.9L4.8 31.1" stroke="#a0a0a0" stroke-width="1.3"/><path d="M31.5 14.2L33.3 14.8" stroke="#e8e8e8" stroke-width="0.9"/><path d="M30.6 4.0L28.2 4.2" stroke="#ffffff" stroke-width="1.2"/><path d="M9.9 25.7L14.4 27.0" stroke="#cfcfcf" stroke-width="0.9"/><path d="M29.4 6.2L31.7 11.2" stroke="#e8e8e8" stroke-width="1.1"/><path d="M7.9 20.0L8.9 23.1" stroke="#a0a0a0" stroke-width="0.7"/><path d="M29.4 8.2L25.6 12.2" stroke="#ffffff" stroke-width="0.9"/><path d="M10.7 30.5L15.5 31.2" stroke="#ffffff" stroke-width="1.3"/><path d="M9.5 23.1L8.0 28.0" stroke="#e8e8e8" stroke-width="0.6"/><path d="M7.5 15.2L1.7 16.0" stroke="#a0a0a0" stroke-width="1.2"/><path d="M29.2 26.1L32.6 27.6" stroke="#e8e8e8" stroke-width="1.2"/><path d="M23.6 26.3L20.4 29.1" stroke="#ffffff" stroke-width="1.3"/><path d="M14.7 25.1L13.6 28.7" stroke="#a0a0a0" stroke-width="1.2"/><path d="M7.9 2.1L11.9 2.5" stroke="#ffffff" stroke-width="0.7"/><path d="M13.6 3.4L17.9 4.3" stroke="#cfcfcf" stroke-width="0.7"/><path d="M16.0 22.7L16.4 25.2" stroke="#a0a0a0" stroke-width="1.0"/><path d="M6.4 9.6L25.6 8.0" stroke="#ddd" stroke-width="1.5"/><path d="M17.6 3.2L24.0 28.8" stroke="#ccc" stroke-width="1.2"/></g></svg>
<div class="a" style="left:0;top:193px;width:1920px;height:1px;background:#dadce0"></div>
<!-- docs toolbar -->
<svg class="a" style="left:26.0px;top:202.5px" width="19" height="19" viewBox="0 0 24 24"><path d="M12.5 8c-2.65 0-5.05.99-6.9 2.6L2 7v9h9l-3.62-3.62c1.39-1.16 3.16-1.88 5.12-1.88 3.54 0 6.55 2.31 7.6 5.5l2.37-.78C21.08 11.03 17.15 8 12.5 8z" fill="#444746"/></svg>
<svg class="a" style="left:54.5px;top:202.5px" width="19" height="19" viewBox="0 0 24 24"><path d="M18.4 10.6C16.55 8.99 14.15 8 11.5 8c-4.65 0-8.58 3.030-9.96 7.22L3.9 16c1.05-3.19 4.05-5.5 7.6-5.5 1.95 0 3.73.72 5.12 1.88L13 16h9V7l-3.6 3.6z" fill="#444746"/></svg>
<svg class="a" style="left:82.5px;top:203.0px" width="19" height="19" viewBox="0 0 24 24"><path d="M19 8H5c-1.66 0-3 1.34-3 3v6h4v4h12v-4h4v-6c0-1.66-1.34-3-3-3zm-3 11H8v-5h8v5zm3-7c-.55 0-1-.45-1-1s.45-1 1-1 1 .45 1 1-.45 1-1 1zm-1-9H6v4h12V3z" fill="#444746"/></svg>
<svg class="a" style="left:110.5px;top:203.5px" width="19" height="19" viewBox="0 0 24 24"><path d="M12.45 16h2.09L9.43 3H7.57L2.46 16h2.09l1.12-3h5.64l1.14 3zm-6.02-5L8.5 5.48 10.57 11H6.43zm15.16.59l-8.09 8.09L9.83 16l-1.41 1.41 5.09 5.09L23 13l-1.41-1.41z" fill="#444746"/></svg>
<svg class="a" style="left:139.5px;top:203.5px" width="18" height="18" viewBox="0 0 24 24"><path d="M18 4V3c0-.55-.45-1-1-1H5c-.55 0-1 .45-1 1v4c0 .55.45 1 1 1h12c.55 0 1-.45 1-1V6h1v4H9v11c0 .55.45 1 1 1h2c.55 0 1-.45 1-1v-9h8V4h-3z" fill="#444746"/></svg>
<div class="a" style="left:166px;top:203px;width:1px;height:20px;background:#dadce0"></div>
<div class="a" style="left:182px;top:205px;font-size:12px;color:#444746;white-space:nowrap">100%</div>
<div class="a" style="left:224px;top:211px;width:0;height:0;border-left:4px solid transparent;border-right:4px solid transparent;border-top:4px solid #444746"></div>
<div class="a" style="left:240px;top:203px;width:1px;height:20px;background:#dadce0"></div>
<div class="a" style="left:256.5px;top:205.5px;font-size:12px;color:#444746;white-space:nowrap">Heading 2</div>
<div class="a" style="left:337px;top:211px;width:0;height:0;border-left:4px solid transparent;border-right:4px solid transparent;border-top:4px solid #444746"></div>
<div class="a" style="left:354px;top:203px;width:1px;height:20px;background:#dadce0"></div>
<div class="a" style="left:371px;top:205.5px;font-size:12px;color:#444746;white-space:nowrap">Arial</div>
<div class="a" style="left:451px;top:211px;width:0;height:0;border-left:4px solid transparent;border-right:4px solid transparent;border-top:4px solid #444746"></div>
<div class="a" style="left:469px;top:201px;width:89px;height:24px;border:1px solid #c4c7c5;border-radius:3px"></div>
<div class="a" style="left:493px;top:201px;width:1px;height:24px;background:#dadce0"></div>
<div class="a" style="left:533px;top:201px;width:1px;height:24px;background:#dadce0"></div>
<div class="a" style="left:477px;top:212px;width:10px;height:2px;background:#444746"></div>
<div class="a" style="left:501px;top:205.5px;font-size:12px;color:#444746;white-space:nowrap">30.5</div>
<svg class="a" style="left:537.5px;top:205.0px" width="16" height="16" viewBox="0 0 24 24"><path d="M19 13h-6v6h-2v-6H5v-2h6V5h2v6h6v2z" fill="#444746"/></svg>
<div class="a" style="left:564px;top:200px;width:26px;height:26px;border-radius:2px;background:#e9eef6"></div>
<svg class="a" style="left:567.5px;top:203.5px" width="19" height="19" viewBox="0 0 24 24"><path d="M15.6 10.79c.97-.67 1.65-1.77 1.65-2.79 0-2.26-1.75-4-4-4H7v14h7.04c2.09 0 3.710-1.7 3.71-3.79 0-1.52-.86-2.82-2.15-3.420zM10 6.5h3c.83 0 1.5.67 1.5 1.5s-.67 1.5-1.5 1.5h-3v-3zm3.5 9H10v-3h3.5c.83 0 1.5.67 1.5 1.5s-.67 1.5-1.5 1.5z" fill="#1a73e8"/></svg>
<svg class="a" style="left:596.0px;top:204.0px" width="18" height="18" viewBox="0 0 24 24"><path d="M10 4v3h2.21l-3.42 8H6v3h8v-3h-2.21l3.42-8H18V4z" fill="#444746"/></svg>
<svg class="a" style="left:623.5px;top:204.5px" width="18" height="18" viewBox="0 0 24 24"><path d="M12 17c3.31 0 6-2.69 6-6V3h-2.5v8c0 1.93-1.57 3.5-3.5 3.5S8.5 12.93 8.5 11V3H6v8c0 3.31 2.69 6 6 6zm-7 2v2h14v-2H5z" fill="#444746"/></svg>
<svg class="a" style="left:652.0px;top:201.5px" width="19" height="19" viewBox="0 0 24 24"><path d="M11 2L5.5 16h2.25l1.12-3h6.25l1.12 3h2.25L13 2h-2zm-1.38 9L12 4.670 14.38 11H9.62z" fill="#444746"/></svg>
<div class="a" style="left:651px;top:221px;width:22px;height:3.5px;background:#202124"></div>
<svg class="a" style="left:683.0px;top:202.0px" width="18" height="18" viewBox="0 0 24 24"><path d="M13.06 5.19l3.75 3.75L7.75 18H4v-3.75l9.06-9.06zm4.82 2.68l-3.75-3.75 1.83-1.83c.39-.39 1.02-.39 1.41 0l2.34 2.34c.39.39.39 1.02 0 1.41l-1.83 1.83z" fill="#444746"/></svg>
<div class="a" style="left:711px;top:203px;width:1px;height:20px;background:#dadce0"></div>
<svg class="a" style="left:718.5px;top:202.0px" width="22" height="22" viewBox="0 0 24 24"><path d="M3.9 12c0-1.71 1.39-3.1 3.1-3.1h4V7H7c-2.76 0-5 2.24-5 5s2.24 5 5 5h4v-1.9H7c-1.71 0-3.1-1.39-3.1-3.1zM8 13h8v-2H8v2zm9-6h-4v1.9h4c1.71 0 3.1 1.39 3.1 3.1s-1.39 3.1-3.1 3.1h-4V17h4c2.76 0 5-2.24 5-5s-2.24-5-5-5z" fill="#444746"/></svg>
<svg class="a" style="left:749.0px;top:204.0px" width="18" height="18" viewBox="0 0 24 24"><path d="M22 4c0-1.1-.9-2-2-2H4c-1.1 0-1.99.9-1.99 2L2 16c0 1.1.9 2 2 2h14l4 4-.01-18zM20 4v13.17L18.83 16H4V4h16zM11 6h2v3h3v2h-3v3h-2v-3H8V9h3V6z" fill="#c4c7c5"/></svg>
<svg class="a" style="left:776.0px;top:204.0px" width="18" height="18" viewBox="0 0 24 24"><path d="M19 5v14H5V5h14m0-2H5c-1.1 0-2 .9-2 2v14c0 1.1.9 2 2 2h14c1.1 0 2-.9 2-2V5c0-1.1-.9-2-2-2zm-4.86 8.86l-3 3.87L9 13.14 6 17h12l-3.86-5.14z" fill="#444746"/></svg>
<div class="a" style="left:798px;top:211px;width:0;height:0;border-left:4px solid transparent;border-right:4px solid transparent;border-top:4px solid #444746"></div>
<div class="a" style="left:815px;top:203px;width:1px;height:20px;background:#dadce0"></div>
<div class="a" style="left:821px;top:200px;width:26px;height:26px;border-radius:2px;background:#e9eef6"></div>
<div class="a" style="left:827px;top:206px;width:14px;height:2px;background:#1b5fc9"></div>
<div class="a" style="left:827px;top:210px;width:10px;height:2px;background:#1b5fc9"></div>
<div class="a" style="left:827px;top:214px;width:14px;height:2px;background:#1b5fc9"></div>
<div class="a" style="left:827px;top:218px;width:10px;height:2px;background:#1b5fc9"></div>
<div class="a" style="left:855px;top:206px;width:14px;height:2px;background:#474747"></div>
<div class="a" style="left:857px;top:210px;width:10px;height:2px;background:#474747"></div>
<div class="a" style="left:855px;top:214px;width:14px;height:2px;background:#474747"></div>
<div class="a" style="left:857px;top:218px;width:10px;height:2px;background:#474747"></div>
<div class="a" style="left:883px;top:206px;width:14px;height:2px;background:#474747"></div>
<div class="a" style="left:887px;top:210px;width:10px;height:2px;background:#474747"></div>
<div class="a" style="left:883px;top:214px;width:14px;height:2px;background:#474747"></div>
<div class="a" style="left:887px;top:218px;width:10px;height:2px;background:#474747"></div>
<div class="a" style="left:911px;top:206px;width:14px;height:2px;background:#474747"></div>
<div class="a" style="left:911px;top:210px;width:14px;height:2px;background:#474747"></div>
<div class="a" style="left:911px;top:214px;width:14px;height:2px;background:#474747"></div>
<div class="a" style="left:911px;top:218px;width:14px;height:2px;background:#474747"></div>
<div class="a" style="left:936px;top:203px;width:1px;height:20px;background:#dadce0"></div>
<svg class="a" style="left:946.0px;top:203.0px" width="20" height="20" viewBox="0 0 24 24"><path d="M6 7h2.5L5 3.5 1.5 7H4v10H1.5L5 20.5 8.5 17H6V7zm4-2v2h12V5H10zm0 14h12v-2H10v2zm0-6h12v-2H10v2z" fill="#444746"/></svg>
<div class="a" style="left:975px;top:203px;width:1px;height:20px;background:#dadce0"></div>
<svg class="a" style="left:984.0px;top:203.5px" width="19" height="19" viewBox="0 0 24 24"><path d="M22 7h-9v2h9V7zm0 8h-9v2h9v-2zM5.54 11L2 7.46l1.41-1.41 2.12 2.12 4.24-4.24 1.41 1.41L5.54 11zm0 8L2 15.46l1.41-1.41 2.12 2.12 4.24-4.24 1.41 1.41L5.54 19z" fill="#444746"/></svg>
<svg class="a" style="left:1013.0px;top:203.5px" width="19" height="19" viewBox="0 0 24 24"><path d="M4 10.5c-.83 0-1.5.67-1.5 1.5s.67 1.5 1.5 1.5 1.5-.67 1.5-1.5-.67-1.5-1.5-1.5zm0-6c-.83 0-1.5.67-1.5 1.5S3.17 7.5 4 7.5 5.5 6.83 5.5 6 4.83 4.5 4 4.5zm0 12c-.83 0-1.5.68-1.5 1.5s.68 1.5 1.5 1.5 1.5-.68 1.5-1.5-.67-1.5-1.5-1.5zM7 19h14v-2H7v2zm0-6h14v-2H7v2zm0-8v2h14V5H7z" fill="#444746"/></svg>
<div class="a" style="left:1041px;top:211px;width:0;height:0;border-left:4px solid transparent;border-right:4px solid transparent;border-top:4px solid #444746"></div>
<svg class="a" style="left:1059.0px;top:203.5px" width="19" height="19" viewBox="0 0 24 24"><path d="M2 17h2v.5H3v1h1v.5H2v1h3v-4H2v1zm1-9h1V4H2v1h1v3zm-1 3h1.8L2 13.1v.9h3v-1H3.2L5 10.9V10H2v1zm5-6v2h14V5H7zm0 14h14v-2H7v2zm0-6h14v-2H7v2z" fill="#444746"/></svg>
<div class="a" style="left:1087px;top:211px;width:0;height:0;border-left:4px solid transparent;border-right:4px solid transparent;border-top:4px solid #444746"></div>
<svg class="a" style="left:1104.5px;top:203.5px" width="19" height="19" viewBox="0 0 24 24"><path d="M11 17h10v-2H11v2zm-8-5l4 4V8l-4 4zm0 9h18v-2H3v2zM3 3v2h18V3H3zm8 6h10V7H11v2zm0 4h10v-2H11v2z" fill="#444746"/></svg>
<svg class="a" style="left:1132.5px;top:203.5px" width="19" height="19" viewBox="0 0 24 24"><path d="M3 21h18v-2H3v2zM3 8v8l4-4-4-4zm8 9h10v-2H11v2zM3 3v2h18V3H3zm8 6h10V7H11v2zm0 4h10v-2H11v2z" fill="#444746"/></svg>
<div class="a" style="left:1160px;top:203px;width:1px;height:20px;background:#dadce0"></div>
<svg class="a" style="left:1169.5px;top:203.5px" width="19" height="19" viewBox="0 0 24 24"><path d="M3.27 5L2 6.27l6.97 6.97L6.5 19h3l1.57-3.66L16.73 21 18 19.73 3.55 5.27 3.27 5zM6 5v.18L8.82 8h2.4l-.72 1.68 2.1 2.1L14.21 8H20V5H6z" fill="#444746"/></svg>
<div class="a" style="left:1693px;top:200px;width:129px;height:26px;border-radius:4px;background:#e8eefa"></div>
<svg class="a" style="left:1699px;top:205px" width="16" height="16" viewBox="0 0 16 16"><path d="M2 14l.6-3.2L11 2.4l2.6 2.6-8.4 8.4z" fill="none" stroke="#2f5cb0" stroke-width="1.6" stroke-linejoin="round"/><path d="M9.6 3.8l2.6 2.6" stroke="#2f5cb0" stroke-width="1.4"/></svg>
<div class="a" style="left:1721.5px;top:204.5px;font-size:13px;color:#2f5cb0;white-space:nowrap">Editing</div>
<div class="a" style="left:1808px;top:211px;width:0;height:0;border-left:4.5px solid transparent;border-right:4.5px solid transparent;border-top:4.5px solid #2f5cb0"></div>
<div class="a" style="left:1828px;top:203px;width:1px;height:20px;background:#dadce0"></div>
<svg class="a" style="left:1835.0px;top:201.0px" width="22" height="22" viewBox="0 0 24 24"><path d="M12 8l-6 6 1.41 1.41L12 10.83l4.59 4.58L18 14z" fill="#444746"/></svg>


<div class="a page" style="left:505px;top:247px;width:816px;height:434px"></div>
<div class="a page" style="left:505px;top:690px;width:816px;height:400px"></div>

<div class="a qbox" style="left:632px;top:328px;width:562px;height:108px"></div>
<div class="a qbox" style="left:632px;top:516px;width:562px;height:58px"></div>
<div class="a qbox" style="left:632px;top:863px;width:562px;height:56px"></div>

<!-- ruler -->
<div class="a" style="left:0;top:247px;width:1864px;height:4px;background:linear-gradient(rgba(60,64,67,.10),rgba(60,64,67,0))"></div>
<div class="a" style="left:600px;top:232px;width:624px;height:14px;background:#fff"></div>
<svg class="a" style="left:494px;top:232px" width="840" height="14"><g fill="#9aa0a6"><rect x="22" y="5.5" width="1" height="3"/><rect x="34" y="5.5" width="1" height="3"/><rect x="46" y="5.5" width="1" height="3"/><rect x="58" y="3.5" width="1" height="7"/><rect x="70" y="5.5" width="1" height="3"/><rect x="82" y="5.5" width="1" height="3"/><rect x="94" y="5.5" width="1" height="3"/><rect x="118" y="5.5" width="1" height="3"/><rect x="130" y="5.5" width="1" height="3"/><rect x="142" y="5.5" width="1" height="3"/><rect x="154" y="3.5" width="1" height="7"/><rect x="166" y="5.5" width="1" height="3"/><rect x="178" y="5.5" width="1" height="3"/><rect x="190" y="5.5" width="1" height="3"/><rect x="214" y="5.5" width="1" height="3"/><rect x="226" y="5.5" width="1" height="3"/><rect x="238" y="5.5" width="1" height="3"/><rect x="250" y="3.5" width="1" height="7"/><rect x="262" y="5.5" width="1" height="3"/><rect x="274" y="5.5" width="1" height="3"/><rect x="286" y="5.5" width="1" height="3"/><rect x="310" y="5.5" width="1" height="3"/><rect x="322" y="5.5" width="1" height="3"/><rect x="334" y="5.5" width="1" height="3"/><rect x="346" y="3.5" width="1" height="7"/><rect x="358" y="5.5" width="1" height="3"/><rect x="370" y="5.5" width="1" height="3"/><rect x="382" y="5.5" width="1" height="3"/><rect x="406" y="5.5" width="1" height="3"/><rect x="418" y="5.5" width="1" height="3"/><rect x="430" y="5.5" width="1" height="3"/><rect x="442" y="3.5" width="1" height="7"/><rect x="454" y="5.5" width="1" height="3"/><rect x="466" y="5.5" width="1" height="3"/><rect x="478" y="5.5" width="1" height="3"/><rect x="502" y="5.5" width="1" height="3"/><rect x="514" y="5.5" width="1" height="3"/><rect x="526" y="5.5" width="1" height="3"/><rect x="538" y="3.5" width="1" height="7"/><rect x="550" y="5.5" width="1" height="3"/><rect x="562" y="5.5" width="1" height="3"/><rect x="574" y="5.5" width="1" height="3"/><rect x="598" y="5.5" width="1" height="3"/><rect x="610" y="5.5" width="1" height="3"/><rect x="622" y="5.5" width="1" height="3"/><rect x="634" y="3.5" width="1" height="7"/><rect x="646" y="5.5" width="1" height="3"/><rect x="658" y="5.5" width="1" height="3"/><rect x="670" y="5.5" width="1" height="3"/><rect x="694" y="5.5" width="1" height="3"/><rect x="706" y="5.5" width="1" height="3"/><rect x="718" y="5.5" width="1" height="3"/><rect x="730" y="3.5" width="1" height="7"/><rect x="742" y="5.5" width="1" height="3"/><rect x="754" y="5.5" width="1" height="3"/><rect x="766" y="5.5" width="1" height="3"/><rect x="790" y="5.5" width="1" height="3"/><rect x="802" y="5.5" width="1" height="3"/><rect x="814" y="5.5" width="1" height="3"/><rect x="826" y="3.5" width="1" height="7"/></g><g fill="#3c4043" font-family="Liberation Sans" font-size="10.5"><text x="10" y="11" text-anchor="middle">1</text><text x="202" y="11" text-anchor="middle">1</text><text x="298" y="11" text-anchor="middle">2</text><text x="394" y="11" text-anchor="middle">3</text><text x="490" y="11" text-anchor="middle">4</text><text x="586" y="11" text-anchor="middle">5</text><text x="682" y="11" text-anchor="middle">6</text><text x="778" y="11" text-anchor="middle">7</text></g></svg>
<div class="a" style="left:594px;top:235px;width:12px;height:3.5px;background:#4285f4"></div>
<div class="a" style="left:594px;top:239.5px;width:0;height:0;border-left:6px solid transparent;border-right:6px solid transparent;border-top:6.5px solid #4285f4"></div>
<div class="a" style="left:1218px;top:239.5px;width:0;height:0;border-left:6px solid transparent;border-right:6px solid transparent;border-top:6.5px solid #4285f4"></div>
<!-- outline -->
<div class="a" style="left:0;top:247px;width:13px;height:783px;background:#eceef1"></div>
<svg class="a" style="left:32.0px;top:276.0px" width="20" height="20" viewBox="0 0 24 24"><path d="M20 11H7.83l5.59-5.59L12 4l-8 8 8 8 1.41-1.41L7.83 13H20v-2z" fill="#5f6368"/></svg>
<div class="a" style="left:38px;top:319.5px;font-size:12px;color:#5f6368;-webkit-text-stroke:0.4px #5f6368;letter-spacing:-0.1px;white-space:nowrap">SUMMARY</div>
<svg class="a" style="left:251.5px;top:317.0px" width="18" height="18" viewBox="0 0 24 24"><path d="M19 13h-6v6h-2v-6H5v-2h6V5h2v6h6v2z" fill="#444746"/></svg>
<div class="a" style="left:38px;top:350px;width:240px;height:1px;background:#dadce0"></div>
<div class="a" style="left:38px;top:367.5px;font-size:12px;color:#5f6368;-webkit-text-stroke:0.4px #5f6368;letter-spacing:-0.2px;white-space:nowrap">OUTLINE</div>
<div class="a" style="left:14px;top:409px;width:13px;height:2px;background:#3669b0"></div>
<div class="a" style="left:37.5px;top:401.5px;font-size:14.5px;color:#3669b0;white-space:nowrap;letter-spacing:0.5px">Los verbos -er &amp; -ir</div>
<!-- page content -->
<div class="a qh" style="left:632px;top:327.1px;line-height:24px">Question 8</div>
<div class="a qt" style="left:632px;top:383.9px;line-height:20px">____ (compartir) los panqueques con tu amigo.</div>
<div class="a qh" style="left:632px;top:515.3px;line-height:24px">Question 9</div>
<div class="a qt" style="left:632px;top:786.6px;line-height:20px">Él ____ (decidir) practicar el hockey por 5 horas a la semana.</div>
<svg class="a" style="left:651px;top:802.5px" width="96" height="4" viewBox="0 0 96 4"><path d="M0 1.5 L1 2.8 L3 0.8 L5 2.8 L7 0.8 L9 2.8 L11 0.8 L13 2.8 L15 0.8 L17 2.8 L19 0.8 L21 2.8 L23 0.8 L25 2.8 L27 0.8 L29 2.8 L31 0.8 L33 2.8 L35 0.8 L37 2.8 L39 0.8 L41 2.8 L43 0.8 L45 2.8 L47 0.8 L49 2.8 L51 0.8 L53 2.8 L55 0.8 L57 2.8 L59 0.8 L61 2.8 L63 0.8 L65 2.8 L67 0.8 L69 2.8 L71 0.8 L73 2.8 L75 0.8 L77 2.8 L79 0.8 L81 2.8 L83 0.8 L85 2.8 L87 0.8 L89 2.8 L91 0.8 L93 2.8 L95 0.8" fill="none" stroke="#4a7fd8" stroke-width="0.9"/></svg>
<div class="a qh" style="left:632px;top:861.8px;line-height:24px">Question 10</div>
<div class="a qt" style="left:632px;top:922.7px;line-height:20px">Nosotros ____ (insistir) en practicar los deportes cada día.</div>
<div class="a" style="left:1852px;top:666px;width:8px;height:185px;border-radius:4px;background:#dadce0"></div>
<div class="a" style="left:1810px;top:985px;width:37px;height:38px;border:1px solid #dadce0;border-radius:4px;background:#fff"></div>
<svg class="a" style="left:1819px;top:995px" width="20" height="20" viewBox="0 0 20 20"><path d="M2 2h16v14h-6l-2 2.5L8 16H2z" fill="#5f6368"/><path d="M10 4.5l1.3 3.2 3.2 1.3-3.2 1.3L10 13.5l-1.3-3.2L5.5 9l3.2-1.3z" fill="#fff"/></svg>
<!-- side panel -->
<svg class="a" style="left:1882px;top:212px" width="20" height="20" viewBox="0 0 20 20"><rect x="0" y="0" width="20" height="20" rx="2" fill="#4285f4"/><rect x="2.5" y="2.5" width="15" height="15" fill="#fff"/><path d="M17.5 0H20v20h-5v-2.5h2.5z" fill="#fbbc04"/><path d="M0 17.5h17.5V20H2a2 2 0 0 1-2-2z" fill="#34a853"/><path d="M15 20l5-5h-5z" fill="#ea4335"/><text x="10" y="14" text-anchor="middle" font-size="8.5" font-family="Liberation Sans" font-weight="bold" fill="#4285f4">31</text></svg>
<svg class="a" style="left:1882px;top:268px" width="20" height="20" viewBox="0 0 20 20"><rect x="0" y="0" width="20" height="20" rx="2" fill="#fbbc04"/><circle cx="10" cy="8.5" r="4" fill="#fff"/><rect x="8" y="12" width="4" height="3" fill="#fff"/></svg>
<svg class="a" style="left:1882px;top:324px" width="20" height="20" viewBox="0 0 20 20"><circle cx="10" cy="10.5" r="7.5" fill="none" stroke="#1a73e8" stroke-width="2.8"/><path d="M6.5 10.5l2.5 2.5 6-6" fill="none" stroke="#1a73e8" stroke-width="2.6"/><path d="M15 1.5l3.5 3.5" stroke="#fff" stroke-width="3"/></svg>
<svg class="a" style="left:1882px;top:380px" width="20" height="20" viewBox="0 0 20 20"><circle cx="10" cy="10" r="10" fill="#1a73e8"/><circle cx="10" cy="7.5" r="3" fill="#fff"/><path d="M4.5 14.5c1-2.5 3-3.5 5.5-3.5s4.5 1 5.5 3.5z" fill="#fff"/></svg>
<svg class="a" style="left:1885.5px;top:437px" width="13" height="18" viewBox="0 0 16 22"><path d="M8 0a8 8 0 0 1 8 8c0 5-5 8-8 14C5 16 0 13 0 8a8 8 0 0 1 8-8z" fill="#34a853"/><path d="M2.3 2.3A8 8 0 0 1 8 0v5a3 3 0 0 0-3 3H0a8 8 0 0 1 2.3-5.7z" fill="#ea4335"/><path d="M8 0a8 8 0 0 1 8 8h-5a3 3 0 0 0-3-3z" fill="#4285f4"/><path d="M0 8h5a3 3 0 0 0 3 3c-2 2-4 4-5 6C1 14 0 11 0 8z" fill="#fbbc04"/><circle cx="8" cy="8" r="3" fill="#fff"/></svg>
<div class="a" style="left:1882px;top:491px;width:21px;height:1px;background:#dadce0"></div>
<svg class="a" style="left:1882.0px;top:525.0px" width="20" height="20" viewBox="0 0 24 24"><path d="M19 13h-6v6h-2v-6H5v-2h6V5h2v6h6v2z" fill="#5f6368"/></svg>
<svg class="a" style="left:1881.5px;top:993.0px" width="20" height="20" viewBox="0 0 24 24"><path d="M10 6L8.59 7.41 13.17 12l-4.58 4.59L10 18l6-6z" fill="#5f6368"/></svg>
<div id="taskbar" class="a"></div>
<!-- taskbar contents -->
<div class="a" style="left:0;top:1030px;width:61px;height:50px;background:#e0d3d4"></div>
<svg class="a" style="left:20px;top:1045px" width="21" height="21" viewBox="0 0 21 21"><path d="M0 3l8.5-1.2V10H0zM9.5 1.7L21 0v10H9.5zM0 11h8.5v8.2L0 18zM9.5 11H21v10l-11.5-1.7z" fill="#000"/></svg>
<div class="a" style="left:61px;top:1030px;width:428px;height:50px;background:#fff;border-top:1px solid #d9d9d9;border-right:1px solid #d0d0d0"></div>
<svg class="a" style="left:74px;top:1044px" width="23" height="23" viewBox="0 0 23 23"><circle cx="13.5" cy="9.5" r="6.8" fill="none" stroke="#111" stroke-width="1.5"/><path d="M8.6 14.4L2 21" stroke="#111" stroke-width="1.6"/></svg>
<div class="a" style="left:110px;top:1045px;font-size:18.5px;color:#333;white-space:nowrap">Type here to search</div>
<svg class="a" style="left:390px;top:1033px" width="98" height="44" viewBox="0 0 98 44">
<path d="M16 26c1 5-3 7 0 12" stroke="#444" stroke-width="1" fill="none"/>
<ellipse cx="14" cy="13" rx="8" ry="10" fill="#2fb3c5"/><ellipse cx="11" cy="10" rx="3" ry="4" fill="#7fe0ea" opacity=".7"/>
<path d="M28 32c-2 4 2 6-1 9" stroke="#3b2c6e" stroke-width="1.2" fill="none"/>
<ellipse cx="28" cy="24" rx="6.5" ry="8" fill="#e83a6a"/><ellipse cx="26" cy="21" rx="2" ry="3" fill="#ff9ab5" opacity=".7"/>
<path d="M35 28c-3-8 2-16 9-14 3-6 13-6 16 0 7-1 10 6 7 14z" fill="#d8d0ea"/><path d="M37 28h30v6c-5 2-25 2-30 0z" fill="#c8bfe0"/><path d="M40 18c4-3 8-3 10 0" stroke="#fff" stroke-width="2" fill="none" opacity=".6"/>
<path d="M72 38l8-18" stroke="#e38a4c" stroke-width="3.5" stroke-linecap="round"/><ellipse cx="83" cy="14" rx="5.5" ry="8" transform="rotate(25 83 14)" fill="#ef9a5a"/>
<path d="M68 4l2 3 3 0-2 2 1 3-3-2-3 2 1-3-2-2 3 0z" fill="#b37ad8"/>
<circle cx="33" cy="40" r="2.3" fill="#e8b840"/><circle cx="86" cy="36" r="2.2" fill="#3ab56a"/>
</svg>
<div class="a" style="left:510px;top:1045px;width:20px;height:20px;border-radius:50%;border:3px solid #111"></div>
<svg class="a" style="left:569px;top:1044px" width="22" height="21" viewBox="0 0 22 21"><path d="M1.5 0.5v3.5h12V0.5M1.5 20.5V17h12v3.5" fill="none" stroke="#111" stroke-width="1.3"/><rect x="1.5" y="6.2" width="12" height="8.3" fill="none" stroke="#111" stroke-width="1.3"/><path d="M19.5 0.5v19.5" stroke="#111" stroke-width="1.3"/><rect x="18" y="7" width="3" height="3" fill="#111"/></svg>
<svg class="a" style="left:628px;top:1040px" width="31" height="31" viewBox="0 0 31 31">
<defs><linearGradient id="eg1" x1="0" y1="0" x2="1" y2="0.6"><stop offset="0" stop-color="#2ea8e0"/><stop offset=".55" stop-color="#36c3a6"/><stop offset="1" stop-color="#6fd24a"/></linearGradient>
<linearGradient id="eg2" x1="0" y1="0" x2="0.4" y2="1"><stop offset="0" stop-color="#1d8de0"/><stop offset="1" stop-color="#0b55a8"/></linearGradient></defs>
<circle cx="15.5" cy="15.5" r="15" fill="url(#eg2)"/>
<path d="M0.8 13.5C2 6 8 0.5 15.5 0.5 24 0.5 30.5 7 30.5 15c0 4.5-3.5 7-7.5 7-3.5 0-6-1.5-6-4 0-1.5 1.3-2 1.3-4 0-3-3.5-5.5-7.5-5.5C6 8.5 2 10.5 0.8 13.5z" fill="url(#eg1)"/>
<ellipse cx="14.5" cy="17.5" rx="3.2" ry="2.6" fill="#d9f0fb"/>
<path d="M4 22c2 5 7 8.5 12.5 8.5 3 0 6-1 8-2.5-6 1-13-2-13-9.5-3 0-6 1.5-7.5 3.5z" fill="#0d4f9c" opacity=".75"/>
</svg>
<svg class="a" style="left:692px;top:1043px" width="28" height="23" viewBox="0 0 28 23"><path d="M0 2a2 2 0 0 1 2-2h8l2 2.5h14a2 2 0 0 1 2 2V21a2 2 0 0 1-2 2H2a2 2 0 0 1-2-2z" fill="#f8d775"/><path d="M0 2a2 2 0 0 1 2-2h8l2 2.5H0z" fill="#e3a724"/><path d="M0 5h28v2H0z" fill="#f2c84f" opacity=".6"/><path d="M7 23v-9h14v9h-4v-5h-6v5z" fill="#3a8fd3"/></svg>
<svg class="a" style="left:753px;top:1041px" width="30" height="29" viewBox="0 0 30 29"><path d="M9 6V3.5a3 3 0 0 1 3-3h6a3 3 0 0 1 3 3V6" fill="none" stroke="#2a9fe0" stroke-width="2"/><path d="M0 5h30v20a4 4 0 0 1-4 4H4a4 4 0 0 1-4-4z" fill="#174f91"/><rect x="9" y="11" width="5" height="5" fill="#f25022"/><rect x="15.5" y="11" width="5" height="5" fill="#7fba00"/><rect x="9" y="17.5" width="5" height="5" fill="#00a4ef"/><rect x="15.5" y="17.5" width="5" height="5" fill="#ffb900"/></svg>
<svg class="a" style="left:815px;top:1040px" width="31" height="29" viewBox="0 0 31 29"><path d="M0 11L15 1l15 10v18H0z" fill="#0a5fb4"/><rect x="4" y="5" width="22" height="14" fill="#fff"/><path d="M0 11l15 10 15-10v18H0z" fill="#28a8ea"/><path d="M0 29l15-10 15 10z" fill="#1490df"/></svg>
<div class="a" style="left:835px;top:1052.5px;width:22px;height:22px;border-radius:50%;background:#d9d9d9;border:1px solid #444;font-size:14.5px;font-weight:bold;color:#111;text-align:center;line-height:20px;letter-spacing:-0.6px">57</div>
<svg class="a" style="left:877px;top:1040px" width="30" height="30" viewBox="0 0 30 30"><rect width="30" height="30" fill="#2ba5d9"/><path d="M10 6h5v14h8v4H8z" fill="#1a3c7c"/><path d="M11 5h5v14h8v5H11z" fill="#fff"/></svg>
<svg class="a" style="left:939px;top:1040px" width="30" height="30" viewBox="0 0 30 30"><rect width="30" height="30" fill="#e53325"/><path d="M10 8v14M15 8v14M20 8v14" stroke="#fff" stroke-width="2.2"/><rect x="8.5" y="12" width="3" height="2.5" fill="#fff"/><rect x="13.5" y="16" width="3" height="2.5" fill="#fff"/><rect x="18.5" y="12" width="3" height="2.5" fill="#fff"/></svg>
<svg class="a" style="left:1002px;top:1040px" width="28" height="30" viewBox="0 0 28 30"><path d="M0 4l14 7 14-7v19l-14 7-14-7z" fill="#c01818"/><path d="M5 11.5l9 4.5 9-4.5v9l-9 4.5-9-4.5z" fill="#e8e8e8"/></svg>
<svg class="a" style="left:1066px;top:1041px" width="22" height="28" viewBox="0 0 22 28"><defs><linearGradient id="og" x1="0" y1="0" x2="1" y2="1"><stop offset="0" stop-color="#d83b01"/><stop offset="1" stop-color="#f4842a"/></linearGradient></defs><path d="M0 5.5L14 0.5l8 3v21l-8 3-14-5z" fill="url(#og)"/><path d="M5.5 8.5l8.5-2.5v16l-8.5-2.5z" fill="#f3e1da"/><path d="M0 5.5l5.5 3v11l-5.5 3z" fill="#b3260b"/></svg>
<svg class="a" style="left:1125px;top:1039px" width="30" height="31" viewBox="0 0 30 31"><ellipse cx="15" cy="15.5" rx="15" ry="15.5" fill="#e0131b"/><ellipse cx="15" cy="15.5" rx="6.5" ry="11.5" fill="#ebebeb"/></svg>
<div class="a" style="left:1172px;top:1030px;width:60px;height:50px;background:#f3eeef"></div>
<div class="a" style="left:1172px;top:1077px;width:60px;height:3px;background:#4a8ed9"></div>
<svg class="a" style="left:1187px;top:1039px" width="36" height="36" viewBox="0 0 36 36">
<circle cx="14" cy="14" r="14" fill="#db4437"/><path d="M14 14L26.1 7A14 14 0 0 1 14 28z" fill="#fbc02d"/><path d="M14 14L14 28A14 14 0 0 1 1.9 7z" fill="#0f9d58"/><path d="M14 14L1.9 7A14 14 0 0 1 26.1 7z" fill="#db4437"/>
<circle cx="14" cy="14" r="6.3" fill="#fff"/><circle cx="14" cy="14" r="5" fill="#4285f4"/>
<defs><clipPath id="cav"><circle cx="24" cy="24" r="11"/></clipPath></defs><circle cx="24" cy="24" r="11" fill="#2a2d2e"/><g clip-path="url(#cav)"><path d="M23.0 25.3L19.9 26.1" stroke="#aaa" stroke-width="0.7"/><path d="M24.3 26.9L22.8 28.0" stroke="#fff" stroke-width="0.7"/><path d="M24.9 32.6L23.4 35.9" stroke="#888" stroke-width="1.3"/><path d="M27.4 26.5L28.8 27.3" stroke="#ddd" stroke-width="0.6"/><path d="M17.2 18.3L20.3 18.6" stroke="#888" stroke-width="1.0"/><path d="M17.3 18.1L18.2 19.4" stroke="#ddd" stroke-width="0.9"/><path d="M19.1 34.9L14.7 35.0" stroke="#fff" stroke-width="0.8"/><path d="M18.1 19.4L22.1 20.3" stroke="#888" stroke-width="0.7"/><path d="M19.4 14.5L23.3 14.7" stroke="#aaa" stroke-width="0.7"/><path d="M33.0 23.3L30.1 23.5" stroke="#ddd" stroke-width="1.0"/><path d="M17.4 27.8L18.6 30.1" stroke="#ddd" stroke-width="1.3"/><path d="M29.7 15.6L31.0 16.9" stroke="#ddd" stroke-width="0.9"/><path d="M23.7 28.0L26.4 29.8" stroke="#aaa" stroke-width="0.9"/><path d="M21.4 21.7L19.9 21.7" stroke="#fff" stroke-width="1.3"/><path d="M13.4 17.1L9.8 17.2" stroke="#ddd" stroke-width="0.6"/><path d="M16.2 22.7L19.9 22.8" stroke="#fff" stroke-width="0.9"/><path d="M14.6 17.6L14.0 19.0" stroke="#fff" stroke-width="0.9"/><path d="M23.0 34.1L23.2 37.6" stroke="#888" stroke-width="0.7"/><path d="M16.4 33.0L14.4 34.3" stroke="#aaa" stroke-width="0.7"/><path d="M26.8 25.2L25.3 27.6" stroke="#888" stroke-width="1.0"/><path d="M22.3 15.3L27.1 15.9" stroke="#aaa" stroke-width="1.1"/><path d="M21.6 22.3L18.5 23.2" stroke="#aaa" stroke-width="1.3"/><path d="M34.5 15.8L34.7 19.6" stroke="#ddd" stroke-width="0.8"/><path d="M33.2 17.5L35.6 17.6" stroke="#888" stroke-width="0.8"/><path d="M14.0 19.2L13.5 24.1" stroke="#ddd" stroke-width="0.9"/><path d="M32.6 34.6L30.7 38.0" stroke="#aaa" stroke-width="1.0"/><path d="M33.3 23.4L34.4 25.8" stroke="#ddd" stroke-width="0.6"/><path d="M27.0 23.6L25.3 25.6" stroke="#ddd" stroke-width="0.7"/><path d="M25.0 29.2L21.1 30.5" stroke="#aaa" stroke-width="1.2"/><path d="M33.1 20.7L30.6 24.6" stroke="#888" stroke-width="1.3"/><path d="M13.7 24.0L17.5 24.2" stroke="#888" stroke-width="1.0"/><path d="M26.4 14.8L24.3 19.3" stroke="#888" stroke-width="1.1"/><path d="M21.5 29.2L20.8 32.1" stroke="#ddd" stroke-width="1.0"/><path d="M24.3 19.8L25.8 20.3" stroke="#ddd" stroke-width="0.9"/><path d="M26.5 33.3L27.6 34.4" stroke="#fff" stroke-width="0.7"/></g>
</svg>
<div class="a" style="left:1233px;top:1030px;width:1px;height:50px;background:#e6dfe1"></div>
<svg class="a" style="left:1511px;top:1041px" width="29" height="29" viewBox="0 0 29 29"><defs><radialGradient id="mg" cx=".3" cy=".7" r=".9"><stop offset="0" stop-color="#ffd84a"/><stop offset="1" stop-color="#f5a300"/></radialGradient></defs><path d="M18 1A14 14 0 1 1 1 18 11 11 0 0 0 18 1z" fill="url(#mg)"/></svg>
<div class="a" style="left:1549px;top:1047px;font-size:17.2px;color:#111;white-space:nowrap">75°F&nbsp; Clear</div>
<svg class="a" style="left:1661px;top:1047px" width="18" height="14" viewBox="0 0 18 14"><path d="M1.5 11.5L9 3.5l7.5 8" fill="none" stroke="#111" stroke-width="1.3"/></svg>
<svg class="a" style="left:1702px;top:1044px" width="18" height="21" viewBox="0 0 18 21"><path d="M4 4.5a8 8 0 0 1 9 0M4 16.5a8 8 0 0 0 9 0" fill="none" stroke="#111" stroke-width="1.2"/><rect x="2.5" y="6.5" width="9" height="8" rx="1" fill="none" stroke="#111" stroke-width="1.3"/><path d="M11.5 9l4.5-2.5v8L11.5 12" fill="none" stroke="#111" stroke-width="1.3"/></svg>
<svg class="a" style="left:1739px;top:1045px" width="21" height="19" viewBox="0 0 21 19"><path d="M1 6.5h3.5L9 2v15l-4.5-4.5H1z" fill="none" stroke="#111" stroke-width="1.3"/><path d="M13 6l6 6M19 6l-6 6" stroke="#111" stroke-width="1.3"/></svg>
<div class="a" style="left:1783px;top:1036px;font-size:14.3px;color:#111;white-space:nowrap">10:13 PM</div>
<div class="a" style="left:1778px;top:1059.5px;font-size:14.6px;color:#111;white-space:nowrap;letter-spacing:0.4px">7/13/2022</div>
<svg class="a" style="left:1868px;top:1044px" width="23" height="22" viewBox="0 0 23 22"><path d="M1.5 1.5h20v15H13l-3 3.5-3-3.5H1.5z" fill="none" stroke="#111" stroke-width="1.3" stroke-linejoin="round"/></svg>
<div class="a" style="left:1914px;top:1030px;width:1px;height:50px;background:#c9c0c3"></div>
</body></html>
